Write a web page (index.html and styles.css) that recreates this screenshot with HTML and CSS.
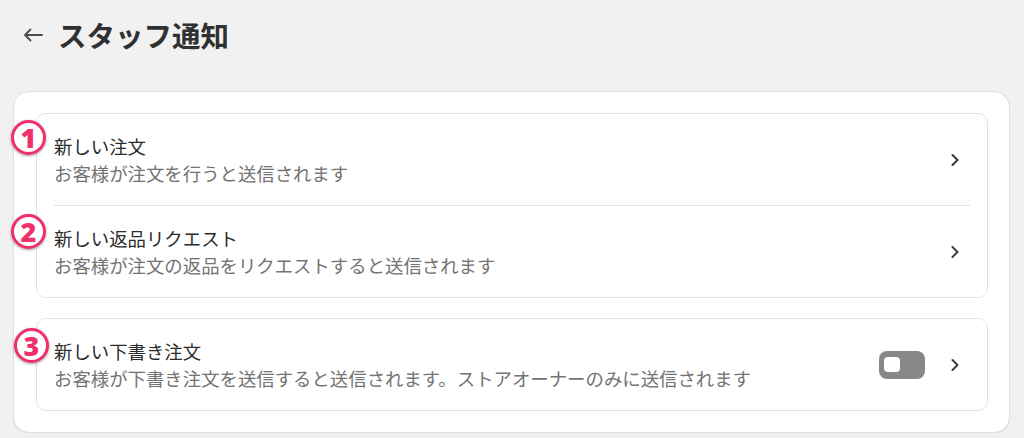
FILE: index.html
```html
<!DOCTYPE html>
<html lang="ja">
<head>
<meta charset="utf-8">
<link rel="stylesheet" href="styles.css">
</head>
<body>
<div class="page">
  <header class="header">
    <svg class="back" width="20" height="14" viewBox="0 0 20 14" aria-hidden="true">
      <path d="M19 7H2M7.5 1.5L2 7l5.5 5.5" fill="none" stroke="#4a4a4a" stroke-width="1.8" stroke-linecap="round" stroke-linejoin="round"/>
    </svg>
    <h1 class="title">スタッフ通知</h1>
  </header>
  <section class="outer">
    <div class="group">
      <div class="row">
        <span class="mark m1">1</span>
        <div class="text">
          <div class="row-title">新しい注文</div>
          <div class="row-sub">お客様が注文を行うと送信されます</div>
        </div>
        <svg class="chev" width="10" height="14" viewBox="0 0 10 14"><path d="M2.5 2l5 5-5 5" fill="none" stroke="#3a3a3a" stroke-width="2" stroke-linecap="round" stroke-linejoin="round"/></svg>
      </div>
      <div class="divider"></div>
      <div class="row">
        <span class="mark m2">2</span>
        <div class="text">
          <div class="row-title">新しい返品リクエスト</div>
          <div class="row-sub">お客様が注文の返品をリクエストすると送信されます</div>
        </div>
        <svg class="chev" width="10" height="14" viewBox="0 0 10 14"><path d="M2.5 2l5 5-5 5" fill="none" stroke="#3a3a3a" stroke-width="2" stroke-linecap="round" stroke-linejoin="round"/></svg>
      </div>
    </div>
    <div class="group">
      <div class="row">
        <span class="mark m3">3</span>
        <div class="text">
          <div class="row-title">新しい下書き注文</div>
          <div class="row-sub">お客様が下書き注文を送信すると送信されます。ストアオーナーのみに送信されます</div>
        </div>
        <span class="toggle"><span class="knob"></span></span>
        <svg class="chev" width="10" height="14" viewBox="0 0 10 14"><path d="M2.5 2l5 5-5 5" fill="none" stroke="#3a3a3a" stroke-width="2" stroke-linecap="round" stroke-linejoin="round"/></svg>
      </div>
    </div>
  </section>
</div>
</body>
</html>
```
FILE: styles.css
```css
* { box-sizing: border-box; }
html, body {
  margin: 0;
  background: #f1f1f1;
  font-family: "Noto Sans CJK JP", "Noto Sans", sans-serif;
  color: #303030;
}
.page {
  padding: 11px 14px 0 13px;
}
.header {
  display: flex;
  align-items: center;
  gap: 15px;
  height: 48px;
  padding-left: 10px;
  margin-bottom: 32px;
}
.back { flex: none; }
.title {
  margin: 0;
  font-size: 28.5px;
  font-weight: 700;
  line-height: 48px;
  color: #303030;
}
.outer {
  background: #fff;
  border: 1px solid #e0e0e0;
  border-radius: 16px;
  box-shadow: 0 1px 1px rgba(0,0,0,0.08);
  padding: 21px 21px 21px 22px;
  display: flex;
  flex-direction: column;
  gap: 20px;
  width: 997px;
}
.group {
  border: 1px solid #e2e2e2;
  border-radius: 10px;
  display: flex;
  flex-direction: column;
}
.row {
  position: relative;
  display: flex;
  align-items: center;
  height: 91px;
  padding: 0 27px 0 17px;
}
.text {
  flex: 1;
  min-width: 0;
}
.row-title, .row-sub {
  font-size: 18.4px;
  line-height: 27px;
  white-space: nowrap;
}
.row-title { color: #2c2c2c; }
.row-sub { color: #737373; }
.divider {
  height: 1px;
  background: #e3e3e3;
  margin: 0 17px;
}
.chev { flex: none; }
.toggle {
  flex: none;
  width: 46px;
  height: 28px;
  border-radius: 8px;
  background: #888;
  margin-right: 25px;
  display: flex;
  align-items: center;
  padding-left: 5px;
}
.knob {
  width: 16px;
  height: 15px;
  border-radius: 4px;
  background: #fff;
}
.mark {
  position: absolute;
  left: -26px;
  width: 35px;
  height: 35px;
  border-radius: 50%;
  background: #fff;
  border: 3px solid #f0306c;
  box-shadow: 0 1px 3px rgba(0,0,0,0.35);
  color: #f0306c;
  font-family: "Noto Sans", sans-serif;
  font-weight: 900;
  font-size: 27px;
  line-height: 29px;
  text-align: center;
}
.m1 { top: 6px; }
.m2 { top: 8px; }
.m3 { top: 9px; left: -23px; }
```
